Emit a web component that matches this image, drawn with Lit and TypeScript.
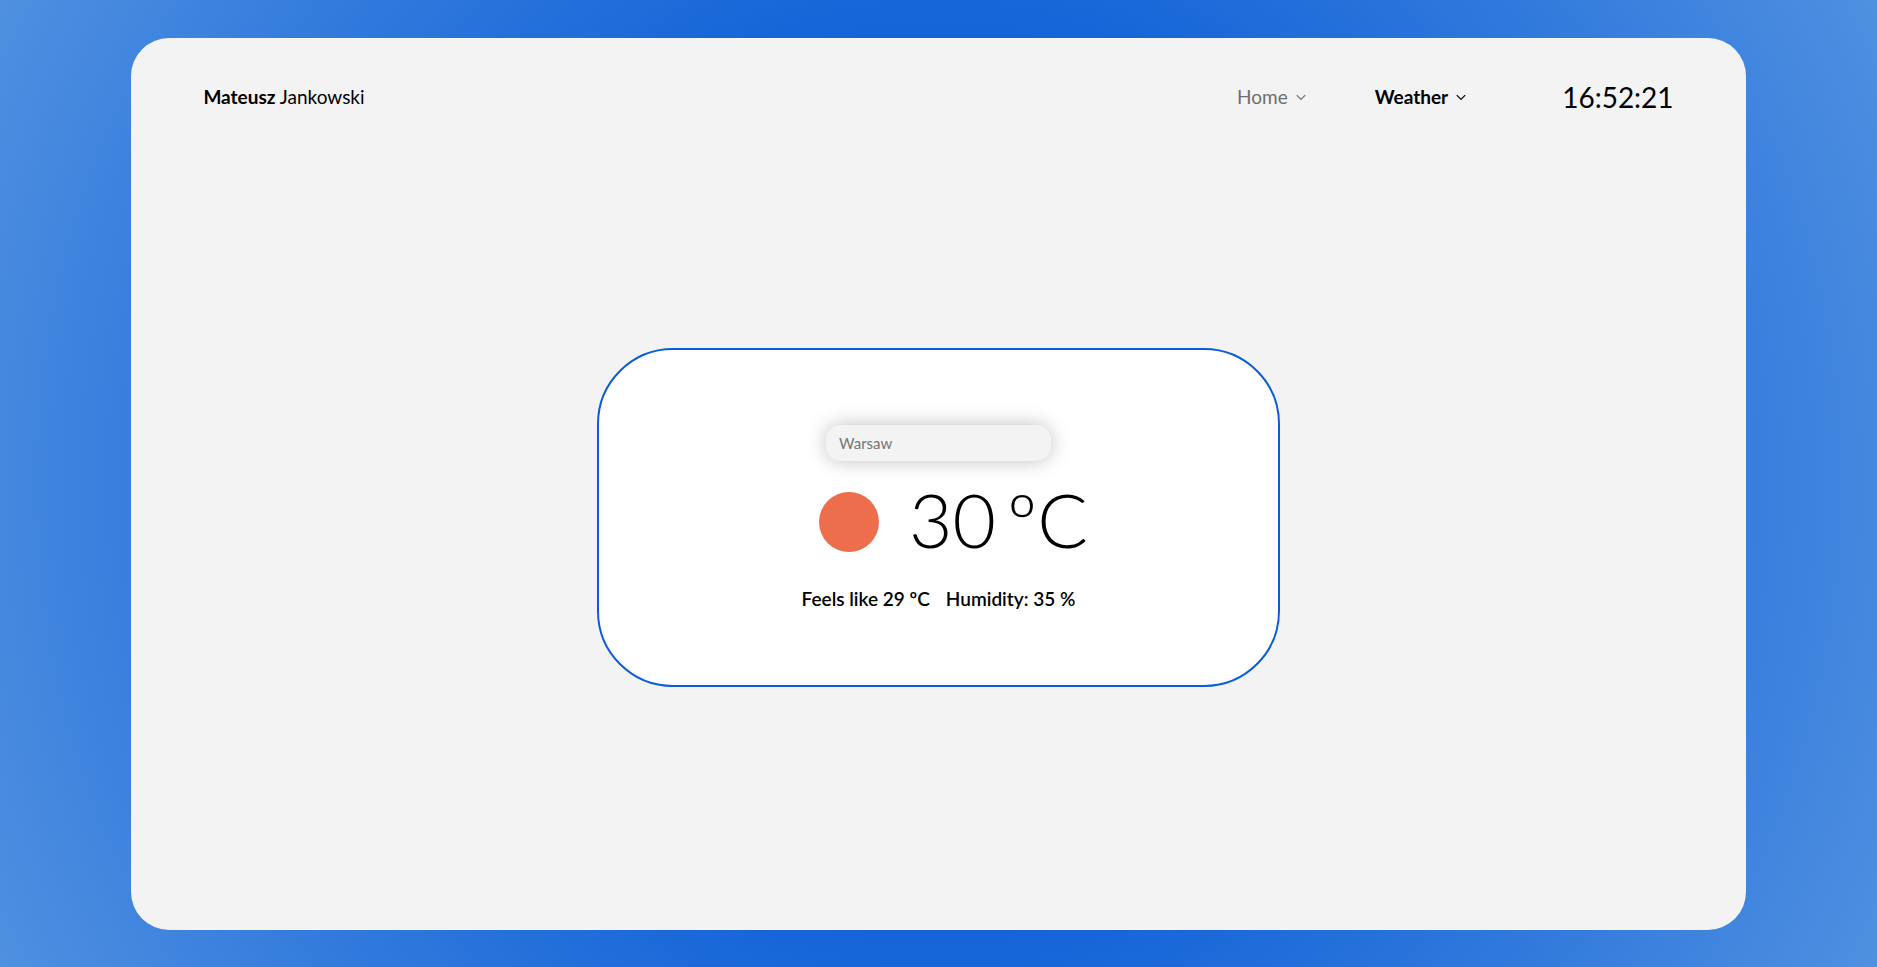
import { LitElement, html, css, svg } from "lit";
import { customElement, property, state } from "lit/decorators.js";

@customElement("nav-item")
class NavItem extends LitElement {
  @property() label = "";
  @property({ type: Boolean }) active = false;

  static styles = css`
    .item {
      display: flex;
      align-items: center;
      gap: 7px;
      padding: 0;
      border: 0;
      background: none;
      font: 400 19px/24px Lato, sans-serif;
      color: #6d6d6d;
      cursor: pointer;
    }
    .item.active {
      font-weight: 700;
      color: #000;
    }
    .chevron {
      width: 12px;
      height: 12px;
    }
  `;

  render() {
    return html`<button class="item ${this.active ? "active" : ""}" type="button" aria-haspopup="true">
      <span>${this.label}</span>
      <svg class="chevron" viewBox="0 0 12 12" fill="none" stroke="currentColor" stroke-width="1.2" aria-hidden="true">
        <path d="M1.8 4.2 6 8.4l4.2-4.2" />
      </svg>
    </button>`;
  }
}

@customElement("app-root")
class AppRoot extends LitElement {
  @state() private temperature = 30;
  @state() private feelsLike = 29;
  @state() private humidity = 35;

  static styles = css`
    :host {
      box-sizing: border-box;
      display: flex;
      justify-content: center;
      min-height: 100vh;
      padding: 38px 0 37px;
      font-family: Lato, sans-serif;
      color: #000;
      background: radial-gradient(circle, #0055d6 23%, #4f90e0 100%);
    }
    * {
      box-sizing: border-box;
    }
    .panel {
      display: flex;
      flex-direction: column;
      width: 86%;
      border-radius: 38px;
      background: #f3f3f3;
    }
    .header {
      display: flex;
      align-items: center;
      justify-content: space-between;
      padding: 41px 72px 0;
    }
    .name {
      color: inherit;
      text-decoration: none;
      font-size: 19px;
      line-height: 24px;
    }
    .nav {
      display: flex;
      align-items: center;
      gap: 68px;
    }
    .clock {
      margin-left: 27px;
      font-size: 28px;
      line-height: 36px;
    }
    .main {
      flex: 1;
      display: flex;
      align-items: center;
      justify-content: center;
      padding-bottom: 10px;
    }
    .card {
      display: flex;
      flex-direction: column;
      align-items: center;
      min-width: 683px;
      padding: 75px 40px 74px;
      border: 2px solid #0a5cdb;
      border-radius: 76px;
      background: #fff;
    }
    .city {
      width: 225px;
      height: 36px;
      padding: 0 13px;
      border: 0;
      border-radius: 15px;
      outline: none;
      background: #f3f3f3;
      box-shadow: 0 0 20px rgba(0, 0, 0, 0.25);
      font: 400 15px/20px Lato, sans-serif;
    }
    .city::placeholder {
      color: #757575;
      opacity: 1;
    }
    .now {
      display: flex;
      align-items: center;
      margin-top: 12px;
    }
    .sun {
      width: 120px;
      height: 92px;
    }
    .temp {
      display: flex;
      gap: 11px;
      font-size: 75px;
      line-height: 92px;
      font-weight: 300;
    }
    .details {
      display: flex;
      gap: 16px;
      margin-top: 22px;
      font-size: 19px;
      line-height: 24px;
      font-weight: 600;
    }
  `;

  render() {
    return html`
      <div class="panel">
        <header class="header">
          <a class="name" href="#"><b>Mateusz</b> Jankowski</a>
          <nav class="nav">
            <nav-item label="Home"></nav-item>
            <nav-item label="Weather" active></nav-item>
            <time class="clock">16:52:21</time>
          </nav>
        </header>
        <main class="main">
          <section class="card">
            <input class="city" type="text" placeholder="Warsaw" aria-label="City" />
            <div class="now">
              <svg class="sun" viewBox="0 0 120 92" role="img" aria-label="Clear sky">
                ${svg`<circle cx="60" cy="49" r="30" fill="#ec6e4c" />`}
              </svg>
              <div class="temp"><span>${this.temperature}</span><span>ºC</span></div>
            </div>
            <div class="details">
              <span>Feels like ${this.feelsLike} ºC</span>
              <span>Humidity: ${this.humidity} %</span>
            </div>
          </section>
        </main>
      </div>
    `;
  }
}
